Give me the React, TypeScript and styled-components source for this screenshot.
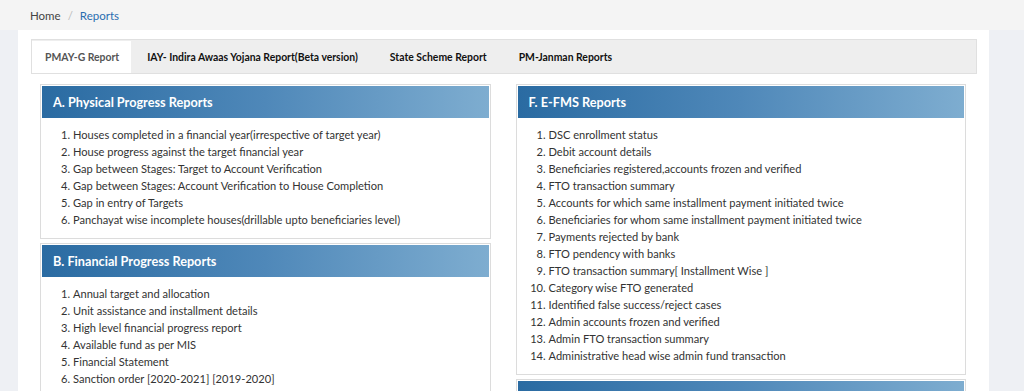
import React from "react";
import styled, { createGlobalStyle } from "styled-components";

const GlobalStyle = createGlobalStyle`
  html, body {
    margin: 0;
    padding: 0;
    background: #eef0f4;
    font-family: Lato, "Open Sans", sans-serif;
    color: #333;
  }
  #root { min-height: 391px; }
`;

const Breadcrumb = styled.nav`
  height: 30px;
  background: #f4f4f4;
  display: flex;
  align-items: center;
  padding-left: 30px;
  font-size: 11.5px;
  gap: 7px;
  color: #444;
`;

const Crumb = styled.span<{ $active?: boolean }>`
  color: ${(p) => (p.$active ? "#2a6db0" : "#444")};
`;

const Sep = styled.span`
  color: #bbb;
`;

const Container = styled.div`
  margin: 0 35px 0 18px;
  background: #fff;
  padding: 9px 12px 0 13px;
  min-height: 361px;
  box-sizing: border-box;
`;

const TabBar = styled.div`
  display: flex;
  align-items: flex-end;
  height: 35px;
  box-sizing: border-box;
  background: #eeeeee;
  border: 1px solid #e0e0e0;
  padding: 1px 0 0 0;
`;

const Tab = styled.div<{ $active?: boolean }>`
  height: 32px;
  display: flex;
  align-items: center;
  padding: ${(p) => (p.$active ? "0 12px 0 13px" : "0 16px")};
  background: ${(p) => (p.$active ? "#fff" : "transparent")};
  color: ${(p) => (p.$active ? "#555" : "#111")};
  font-size: 10.4px;
  font-weight: 700;
  white-space: nowrap;
`;

const Content = styled.div`
  display: grid;
  grid-template-columns: 1fr 1fr;
  column-gap: 25px;
  padding: 10px 11px 0 9px;
`;

const Column = styled.div`
  display: flex;
  flex-direction: column;
  gap: 4px;
`;

const Panel = styled.section`
  border: 1px solid #dcdcdc;
  padding: 1px;
  background: #fff;
`;

const PanelHeader = styled.h3`
  margin: 0;
  height: 32px;
  display: flex;
  align-items: center;
  padding-left: 11px;
  background: linear-gradient(to right, #2a6ba2 0%, #4f88b9 50%, #7eadd0 100%);
  color: #fff;
  font-size: 12.7px;
  font-weight: 700;
`;

const PanelBody = styled.div`
  padding: 8px 0 9px;
`;

const List = styled.ol`
  margin: 0;
  padding-left: 31px;
  font-size: 11.1px;
  line-height: 17px;
  color: #333;
`;

const physical = [
  "Houses completed in a financial year(irrespective of target year)",
  "House progress against the target financial year",
  "Gap between Stages: Target to Account Verification",
  "Gap between Stages: Account Verification to House Completion",
  "Gap in entry of Targets",
  "Panchayat wise incomplete houses(drillable upto beneficiaries level)",
];

const financial = [
  "Annual target and allocation",
  "Unit assistance and installment details",
  "High level financial progress report",
  "Available fund as per MIS",
  "Financial Statement",
  "Sanction order [2020-2021] [2019-2020]",
];

const efms = [
  "DSC enrollment status",
  "Debit account details",
  "Beneficiaries registered,accounts frozen and verified",
  "FTO transaction summary",
  "Accounts for which same installment payment initiated twice",
  "Beneficiaries for whom same installment payment initiated twice",
  "Payments rejected by bank",
  "FTO pendency with banks",
  "FTO transaction summary[ Installment Wise ]",
  "Category wise FTO generated",
  "Identified false success/reject cases",
  "Admin accounts frozen and verified",
  "Admin FTO transaction summary",
  "Administrative head wise admin fund transaction",
];

const ReportPanel = ({ title, items }: { title: string; items: string[] }) => (
  <Panel>
    <PanelHeader>{title}</PanelHeader>
    {items.length > 0 && (
      <PanelBody>
        <List>
          {items.map((t) => (
            <li key={t}>{t}</li>
          ))}
        </List>
      </PanelBody>
    )}
  </Panel>
);

const Viewport = styled.div`
  height: 391px;
  overflow: hidden;
`;

export default function App() {
  return (
    <Viewport>
      <GlobalStyle />
      <Breadcrumb>
        <Crumb>Home</Crumb>
        <Sep>/</Sep>
        <Crumb $active>Reports</Crumb>
      </Breadcrumb>
      <Container>
        <TabBar>
          <Tab $active>PMAY-G Report</Tab>
          <Tab>IAY- Indira Awaas Yojana Report(Beta version)</Tab>
          <Tab>State Scheme Report</Tab>
          <Tab>PM-Janman Reports</Tab>
        </TabBar>
        <Content>
          <Column>
            <ReportPanel title="A. Physical Progress Reports" items={physical} />
            <ReportPanel title="B. Financial Progress Reports" items={financial} />
          </Column>
          <Column>
            <ReportPanel title="F. E-FMS Reports" items={efms} />
            <ReportPanel title="" items={[]} />
          </Column>
        </Content>
      </Container>
    </Viewport>
  );
}
